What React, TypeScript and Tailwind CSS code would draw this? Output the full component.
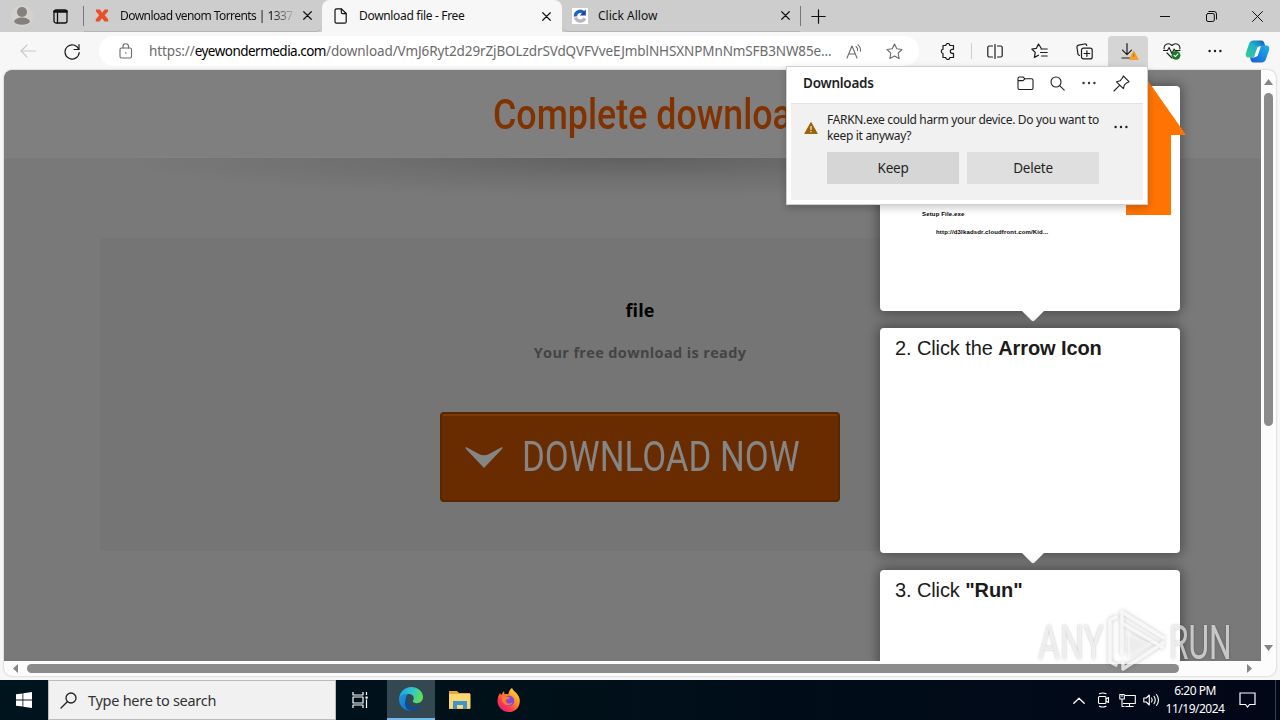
import type { ReactNode } from "react";
import clsx from "clsx";

type IconProps = {
  w?: number;
  h?: number;
  box?: string;
  stroke?: number;
  className?: string;
  children: ReactNode;
};

function Icon({ w = 18, h, box, stroke = 1.1, className, children }: IconProps) {
  const height = h ?? w;

  return (
    <svg
      width={w}
      height={height}
      viewBox={box ?? `0 0 ${w} ${height}`}
      fill="none"
      stroke="currentColor"
      strokeWidth={stroke}
      strokeLinecap="round"
      strokeLinejoin="round"
      className={clsx("shrink-0", className)}
    >
      {children}
    </svg>
  );
}

function Slot({ className, children }: { className: string; children: ReactNode }) {
  return (
    <div className={clsx("flex shrink-0 items-center justify-center", className)}>
      {children}
    </div>
  );
}

function CloseIcon() {
  return (
    <Icon w={9} box="0 0 10 10" stroke={1.3}>
      <path d="M.8.8l8.4 8.4M9.2.8.8 9.2" />
    </Icon>
  );
}

function Dots() {
  return (
    <Icon w={14} h={4}>
      <g fill="currentColor" stroke="none">
        <circle cx="1.6" cy="2" r="1.2" />
        <circle cx="7" cy="2" r="1.2" />
        <circle cx="12.4" cy="2" r="1.2" />
      </g>
    </Icon>
  );
}

function TabStrip() {
  return (
    <div className="flex h-8 shrink-0 items-stretch bg-[#cdcdcd] text-[12px] text-[#111]">
      <Slot className="w-11">
        <Icon w={22} className="text-[#84807c]">
          <circle cx="11" cy="11" r="11" fill="#d5d1cd" stroke="none" />
          <circle cx="11" cy="7" r="5" fill="currentColor" stroke="none" />
          <ellipse cx="11" cy="16.2" rx="7.8" ry="3.6" fill="currentColor" stroke="none" />
        </Icon>
      </Slot>
      <Slot className="w-8">
        <Icon w={15} h={15} stroke={1.3}>
          <rect x="1" y="1" width="13" height="13" rx="2" />
          <path d="M1.5 2.5h12" strokeWidth="2.6" />
          <path d="M4.5 4v10" />
        </Icon>
      </Slot>
      <div className="my-auto ml-[7px] h-5 w-px bg-[#777]" />

      <div className="flex w-[238px] items-center rounded-br-md border-b border-[#b5b5b5] pl-[11px]">
        <Icon w={14} h={13} className="text-[#e8502a]">
          <path
            d="M1 .5h4l2.2 3.2L9.5.5H13v2L9.7 6.3l3.5 4v2.2H9.5L7 9.2l-2.4 3.3H.8v-2.2l3.4-4L1 2.5z"
            fill="currentColor"
            stroke="none"
          />
        </Icon>
        <span className="ml-[11px] w-[176px] whitespace-nowrap tracking-[-0.56px] [mask-image:linear-gradient(to_right,#000_86%,transparent)]">
          Download venom Torrents | 1337
        </span>
        <Slot className="ml-[3px] w-4">
          <CloseIcon />
        </Slot>
      </div>

      <div className="flex w-[240px] items-center rounded-t-lg bg-[#f7f7f7] pl-3">
        <Icon w={13} h={16} stroke={1.2}>
          <path d="M2.5.8h5l4.7 4.7v8.2a1.5 1.5 0 0 1-1.5 1.5H2.5A1.5 1.5 0 0 1 1 13.7V2.3A1.5 1.5 0 0 1 2.5.8z" />
          <path d="M7.3 1v3.3a1.4 1.4 0 0 0 1.4 1.4H12" />
        </Icon>
        <span className="ml-3 w-[179px] whitespace-nowrap tracking-[-0.32px]">
          Download file - Free
        </span>
        <Slot className="w-4">
          <CloseIcon />
        </Slot>
      </div>

      <div className="flex w-[238px] items-center rounded-bl-md border-b border-[#b5b5b5] pl-[10px]">
        <svg width="16" height="16" viewBox="0 0 16 16" className="shrink-0">
          <rect width="16" height="16" fill="#fff" />
          <path d="M3.5 8.5a4.8 4.8 0 0 1 8-4" stroke="#2262c4" strokeWidth="3.4" fill="none" />
          <path d="M13.8 1.5v6h-6z" fill="#17479e" />
          <path d="M3.5 9.5a5 5 0 0 0 9.3.8" stroke="#b4b8bd" strokeWidth="3.2" fill="none" />
        </svg>
        <span className="ml-2.5 w-[179px] whitespace-nowrap">Click Allow</span>
        <Slot className="w-4">
          <CloseIcon />
        </Slot>
      </div>
      <div className="my-auto h-5 w-px bg-[#777]" />
      <Slot className="w-[35px]">
        <Icon w={15} stroke={1.2}>
          <path d="M7.5.8v13.4M.8 7.5h13.4" />
        </Icon>
      </Slot>

      <div className="ml-auto flex">
        <Slot className="w-[46px]">
          <Icon w={10} stroke={1}>
            <path d="M0 5.5h10" />
          </Icon>
        </Slot>
        <Slot className="w-[46px]">
          <Icon w={11} stroke={1}>
            <rect x=".5" y="2.5" width="7.8" height="8" rx="1.5" />
            <path d="M2.8.5H8A2.5 2.5 0 0 1 10.5 3v5.2" />
          </Icon>
        </Slot>
        <Slot className="w-[46px]">
          <Icon w={11} stroke={1}>
            <path d="M.5.5l10 10M10.5.5l-10 10" />
          </Icon>
        </Slot>
      </div>
    </div>
  );
}

function Toolbar() {
  return (
    <div className="flex h-[38px] shrink-0 items-center bg-[#f7f7f7] text-[#1c1c1c]">
      <Slot className="w-14 text-[#c9c9c9]">
        <Icon w={16} h={14}>
          <path d="M7 1 1 7l6 6M1 7h14.5" />
        </Icon>
      </Slot>
      <Slot className="mr-[11px] w-8">
        <Icon w={16} h={17} stroke={1.2}>
          <path d="M14.8 6.5A7.1 7.1 0 1 0 15.2 9.5" />
          <path d="M15 1.5v5h-5" />
        </Icon>
      </Slot>

      <div className="flex h-[30px] w-[820px] items-center rounded-full bg-white pl-5 text-[#6b6b6b]">
        <Icon w={14} h={16}>
          <rect x="1" y="5" width="11.5" height="10" rx="1.5" />
          <path d="M4 5V3.5a2.7 2.7 0 0 1 5.5 0V5" />
          <circle cx="6.8" cy="10" r=".8" fill="currentColor" stroke="none" />
        </Icon>
        <span className="ml-4 w-[690px] whitespace-nowrap text-[13.5px] tracking-[-0.11px]">
          https://<span className="tracking-[-0.52px] text-black">eyewondermedia.com</span>
          /download/VmJ6Ryt2d29rZjBOLzdrSVdQVFVveEJmblNHSXNPMnNmSFB3NW85e...
        </span>
        <Slot className="w-[31px]">
          <Icon w={17} h={15}>
            <path d="M1 14 6 2l5 12M2.8 10h6.4" />
            <path d="M10 2.5a4 4 0 0 1 1.5 4M12 .8a7 7 0 0 1 2.4 6.5" />
          </Icon>
        </Slot>
        <Slot className="ml-2 w-[32px]">
          <Icon w={17} h={17}>
            <path d="m8.5 1 2.3 4.8 5.2.7-3.8 3.7.9 5.3-4.6-2.5-4.6 2.5.9-5.3L1 6.5l5.2-.7z" />
          </Icon>
        </Slot>
      </div>

      <Slot className="w-[52px] pl-1">
        <Icon w={17} h={17} stroke={1.2}>
          <path d="M4 2.5h2.8a2 2 0 0 1 4 0h3.700v3.800h-1.200a2 2 0 0 0 0 4h1.200v4.200h-3.700a2 2 0 0 1-4 0H4v-4a2.200 2.200 0 0 1 0-4.300z" />
        </Icon>
      </Slot>
      <div className="h-4 w-px bg-[#d0d0d0]" />
      <Slot className="w-[45px]">
        <Icon w={16} h={15} stroke={1.2}>
          <path d="M5.5 2H2.3A1.5 1.5 0 0 0 .8 3.5v8A1.5 1.5 0 0 0 2.3 13h3.2M10.5 2h3.2a1.5 1.5 0 0 1 1.5 1.5v8a1.5 1.5 0 0 1-1.5 1.5h-3.2M8 .5v14" />
        </Icon>
      </Slot>
      <Slot className="w-[45px]">
        <Icon w={17} h={16} stroke={1.2}>
          <path d="M10.2 5.3 7.5 1 5.4 5.3.8 6l3.4 3.4-.8 5 4.1-2.2M10 6h6.2M9.5 9.5h6.7M10.500 13h5.700" />
        </Icon>
      </Slot>
      <Slot className="w-[44px]">
        <Icon w={17} h={17} stroke={1.2}>
          <path d="M3.5 12.5A2.5 2.5 0 0 1 1.8 10L1 4.500A2 2 0 0 1 2.600 2.200L8.500 1a2 2 0 0 1 2.300 1.500" />
          <rect x="5.500" y="5.200" width="10.700" height="10.700" rx="2" />
          <path d="M10.900 7.800v5.500M8.100 10.500h5.600" />
        </Icon>
      </Slot>
      <Slot className="ml-0.5 h-[30px] w-10 rounded-t-[4px] bg-[#d5d5d5] pl-0.5">
        <Icon w={20} h={20} stroke={1.2}>
          <path d="M8 2.5v11M3.5 9.2 8 13.7l4.5-4.5M3 17h8" />
          <path d="m14.700 10.500 4.300 7.800h-8.500z" fill="#f3a02c" stroke="#f3a02c" />
          <path d="M14.700 13v2.500" stroke="#b56a00" strokeWidth="1" />
        </Icon>
      </Slot>
      <Slot className="w-[44px] pl-1">
        <Icon w={18} h={18} stroke={1.1}>
          <path d="M9 16 4 11M1.2 7C.2 2.5 5.5-.2 9 3.5c3.5-3.7 8.8-1 7.8 3.5" />
          <path d="M.5 8.5h4l1.600-3 2.800 6 2.200-4.500 1 1.500h5" />
          <circle cx="13" cy="13.3" r="4.4" fill="#187a28" stroke="none" />
          <path d="m11 13.3 1.4 1.4 2.5-2.8" stroke="#fff" />
        </Icon>
      </Slot>
      <Slot className="w-[46px]">
        <Dots />
      </Slot>
      <Slot className="w-[38px]">
        <svg width="25" height="23" viewBox="0 0 25 23">
          <defs>
            <linearGradient id="copilotA" x1="0" y1="1" x2="1" y2="0">
              <stop offset="0" stopColor="#35d08d" />
              <stop offset=".55" stopColor="#20b1c9" />
              <stop offset="1" stopColor="#1457b8" />
            </linearGradient>
            <linearGradient id="copilotB" x1="0" y1="1" x2="1" y2="0">
              <stop offset="0" stopColor="#1c58d8" />
              <stop offset="1" stopColor="#18b5e8" />
            </linearGradient>
          </defs>
          <path
            d="M8.5.5h7.8c2 0 2.8 1.5 3.3 3.5l.6 2h-3.6c-2.6 0-3.7 1.2-4.4 3.4l-1.7 5.1c-.7 2-1.6 3-3.800 3H4c-3 0-3.800-2-3-4.800L4 4C4.700 1.800 6 .5 8.500.5z"
            fill="url(#copilotA)"
          />
          <path
            d="M16.5 22.5H8.700c-2 0-2.800-1.500-3.300-3.500l-.4-1.500h3c2.800 0 4-1.300 4.700-3.500l1.600-4.800c.7-2.200 1.700-3.700 3.900-3.700H21c3 0 3.800 2 3 4.800L21 19c-.7 2.200-2 3.500-4.500 3.500z"
            fill="url(#copilotB)"
          />
          <path d="M12.900 7.300h2.200l-3 8.600H9.900z" fill="#fff" stroke="#fff" strokeLinejoin="round" />
        </svg>
      </Slot>
    </div>
  );
}

function StepCard({ children }: { children?: ReactNode }) {
  return (
    <div className="relative h-[225px] w-[300px] shrink-0 rounded-[4px] bg-white px-[15px] pt-[5px] font-['Liberation_Sans'] text-[20px] leading-[30px] tracking-[-0.1px] text-[#1b1b1b] shadow-[0_0_12px_2px_rgba(0,0,0,0.38)]">
      {children}
      <svg width="24" height="12" viewBox="0 0 24 12" className="absolute top-full left-[141px] -mt-px">
        <path d="M0 0h24L13.5 10.5q-1.5 1.300-3 0z" fill="#fff" />
      </svg>
    </div>
  );
}

function Watermark() {
  return (
    <div className="absolute top-[609px] left-[1038px] flex h-16 w-[196px] items-center font-['Roboto'] text-[48px] leading-none text-white/65 [text-shadow:0_0_3px_rgba(0,0,0,0.25)]">
      <span className="w-[68px] origin-left scale-x-[0.7] whitespace-nowrap pt-1">ANY</span>
      <svg
        width="60"
        height="64"
        viewBox="0 0 60 64"
        fill="none"
        stroke="#fff"
        strokeOpacity=".75"
        strokeWidth="3.5"
        strokeLinejoin="round"
        strokeLinecap="round"
        className="shrink-0 drop-shadow-[0_0_2px_rgba(0,0,0,0.3)]"
      >
        <path d="M16 44V3l41 25.5M16 14l40 24M57 34 17 60v-6" />
        <path d="M10 8 4 11v42l6 3" />
        <path d="m22 24 24 11-24 14z" fill="#fff" fillOpacity=".55" stroke="none" />
      </svg>
      <span className="ml-[3px] origin-left scale-x-[0.66] whitespace-nowrap pt-1">RUN</span>
    </div>
  );
}

function DownloadPage() {
  return (
    <div className="relative h-[591px] w-[1257px] overflow-hidden rounded-tl-lg bg-[#797979]">
      <div className="h-[88px] border-b border-[#828282] bg-[#7f7f7f] pt-[15px]">
        <h1 className="ml-[489px] w-[400px] origin-left scale-x-[0.852] whitespace-nowrap font-['Roboto'] text-[42px] leading-[60px] font-medium text-[#803300]">
          Complete download
        </h1>
      </div>
      <div className="h-20 bg-[radial-gradient(ellipse_520px_40px_at_50%_0,#606060,#6f6f6f_50%,#797979)]" />

      <div className="mr-[81px] ml-24 flex h-[313px] flex-col items-center rounded-[4px] bg-[#757575] font-['Open_Sans'] font-bold">
        <div className="mt-[60px] text-[18px] leading-6 tracking-[0.1px] text-black">file</div>
        <div className="mt-[19px] text-[14.5px] leading-6 tracking-[0.36px] whitespace-nowrap text-[#444]">
          Your free download is ready
        </div>
        <button
          type="button"
          className="mt-[47px] flex h-[90px] w-[400px] items-center rounded-[4px] border-2 border-[#582600] bg-[#692c00] pl-[23px] text-[#858585] shadow-[inset_0_2px_0_#793b0d]"
        >
          <svg width="38" height="21" viewBox="0 0 38 21" className="shrink-0">
            <path d="M1 0q-1 .5 0 2l18 19L37 2q1-1.5 0-2L24 7q-5 2.500-10 0z" fill="currentColor" />
          </svg>
          <span className="ml-[19px] origin-left scale-x-[0.829] whitespace-nowrap font-['Roboto'] text-[42px] leading-none font-normal">
            DOWNLOAD NOW
          </span>
        </button>
      </div>

      <div className="absolute top-4 left-[876px] flex flex-col gap-[17px]">
        <StepCard>
          <div className="pt-[118px] pl-[27px] text-[6px] leading-[10px] font-bold tracking-[0.16px] text-black">
            <p className="whitespace-nowrap">Setup File.exe</p>
            <p className="mt-[8px] ml-[14px] whitespace-nowrap">http://d3lkadsdr.cloudfront.com/Kid...</p>
          </div>
        </StepCard>
        <StepCard>
          2. Click the <b>Arrow Icon</b>
        </StepCard>
        <StepCard>
          3. Click <b>"Run"</b>
        </StepCard>
      </div>

      <svg width="64" height="140" viewBox="0 0 64 140" className="absolute top-[5px] left-[1120px]">
        <path d="M2 140v-15h20V3l40 57H47v80z" fill="#ff7300" />
      </svg>
    </div>
  );
}

function DownloadsPopup() {
  return (
    <div className="absolute top-[66px] left-[786px] h-[139px] w-[362px] border border-[#cfcfcf] bg-white text-[#1f1f1f] shadow-[0_3px_8px_rgba(0,0,0,0.2)]">
      <div className="flex h-9 items-center pb-1 pl-4">
        <span className="w-[206px] text-[13.5px] font-semibold tracking-[-0.25px]">Downloads</span>
        <Slot className="w-8">
          <Icon w={17} h={14}>
            <path d="M1 5V2.5A1.5 1.5 0 0 1 2.5 1H6l2 1.8h6.5A1.5 1.5 0 0 1 16 4.3V12a1.5 1.5 0 0 1-1.5 1.5h-12A1.5 1.5 0 0 1 1 12zM1 4.6h5L8 2.8" />
          </Icon>
        </Slot>
        <Slot className="w-8">
          <Icon w={15}>
            <circle cx="6" cy="6" r="5" />
            <path d="m9.7 9.7 4.5 4.5" />
          </Icon>
        </Slot>
        <Slot className="w-8 text-[#333]">
          <Dots />
        </Slot>
        <Slot className="w-8">
          <Icon w={17}>
            <path d="m10.3 1 5.7 5.7-2 1-2.6 2.2-1 3.8-6.9-6.900 3.600-1L9.400 3zM6.500 10.300 1 16" />
          </Icon>
        </Slot>
      </div>
      <div className="mx-1 flex h-[97px] border-t border-[#e4e4e4] bg-[#f1f1f1] pl-[13px]">
        <svg width="14" height="12" viewBox="0 0 14 12" className="mt-[18px] mr-[9px] shrink-0">
          <path d="M7 .5 13.3 11.7H.7z" fill="#9a6208" stroke="#9a6208" strokeLinejoin="round" />
          <path d="M7 4v4M7 9v1.3" stroke="#f9e2b0" strokeWidth="1.3" />
        </svg>
        <div className="w-[272px]">
          <p className="mt-2 text-[12px] leading-4 tracking-[-0.32px] whitespace-nowrap">
            FARKN.exe could harm your device. Do you want to
            <br />
            keep it anyway?
          </p>
          <div className="mt-2 flex gap-2 text-[13.5px] tracking-[-0.25px]">
            <button type="button" className="h-8 w-[132px] bg-[#d6d6d6]">
              Keep
            </button>
            <button type="button" className="h-8 w-[132px] bg-[#dfdfdf]">
              Delete
            </button>
          </div>
        </div>
        <Slot className="h-[46px] w-11">
          <Dots />
        </Slot>
      </div>
    </div>
  );
}

function Taskbar() {
  return (
    <div className="flex h-10 shrink-0 items-stretch bg-[linear-gradient(to_right,#00141e,#001019_45%,#020718)] text-white">
      <Slot className="w-12">
        <svg width="16" height="16" viewBox="0 0 16 16" fill="#fff">
          <path d="M0 2.3 6.5 1.4v6.2H0zM7.3 1.3 16 0v7.6H7.3zM0 8.4h6.5v6.2L0 13.7zM7.3 8.4H16V16l-8.7-1.2z" />
        </svg>
      </Slot>
      <div className="flex w-72 items-center border border-[#b9bbbc] bg-[#f1f1f1] pl-[11px] text-[#333]">
        <Icon w={17} h={17} stroke={1.3} className="text-[#222]">
          <circle cx="11" cy="6" r="5" />
          <path d="M7.3 9.7 1 16" />
        </Icon>
        <span className="ml-[11px] pt-0.5 text-[14.5px] tracking-[-0.28px] whitespace-nowrap">
          Type here to search
        </span>
      </div>
      <Slot className="w-[51px] pr-[3px]">
        <Icon w={17} h={16} stroke={1.2}>
          <path d="M1 .5V3h10V.5M1 15.5V13h10v2.5M14.5.5v2M14.5 8v7.5" strokeLinecap="square" />
          <rect x="1" y="5" width="10" height="6" />
          <rect x="13.5" y="4.5" width="2.2" height="2.2" fill="currentColor" stroke="none" />
        </Icon>
      </Slot>
      <Slot className="w-12 border-b-2 border-[#76b9ed] bg-[#334850]">
        <svg width="24" height="24" viewBox="0 0 24 24">
          <defs>
            <linearGradient id="edgeTop" x1="0" y1="0" x2="1" y2=".3">
              <stop offset="0" stopColor="#1d9de0" />
              <stop offset=".55" stopColor="#2cc5d0" />
              <stop offset="1" stopColor="#5fdc5c" />
            </linearGradient>
            <linearGradient id="edgeSide" x1="0" y1="0" x2="1" y2="1">
              <stop offset="0" stopColor="#1a9be5" />
              <stop offset="1" stopColor="#1262b5" />
            </linearGradient>
          </defs>
          <path
            d="M0 12C.5 5 5.5 0 12.2 0 19 0 24 4.6 24 10c0 4-3 6.2-6.2 6.2-3 0-4-1.2-4-2.2 0-.7 1-1.2 1-3 0-2-2-4-5-4C5 6.500 1 9 0 12z"
            fill="url(#edgeTop)"
          />
          <path
            d="M0 12c1-4 5-6 9.500-5.200C7 8.500 6 11.500 7 15c1.200 4.500 5 7 9 7-1.500 1.300-3 2-5 2C4.500 23.500 0 18.500 0 12z"
            fill="url(#edgeSide)"
          />
          <path
            d="M9.500 9.800C6.500 13 8.500 19.500 14.500 20c3 .2 5.500-.8 7.800-2-1.800 3.500-5.500 6-10 6C6 23 3.500 14 9.500 9.800z"
            fill="#124a91"
          />
        </svg>
      </Slot>
      <Slot className="w-[50px]">
        <svg width="22" height="20" viewBox="0 0 22 20">
          <path d="M0 1h8l2 2h11v16H0z" fill="#e9a93a" />
          <path d="M0 4h21.5v14.5H0z" fill="#fcd873" />
          <path d="M4 19v-8h14v8h-4v-4H8v4z" fill="#3f94d0" />
        </svg>
      </Slot>
      <Slot className="w-12">
        <svg width="24" height="24" viewBox="0 0 24 24">
          <defs>
            <linearGradient id="fox" x1="1" y1="0" x2=".2" y2="1">
              <stop offset="0" stopColor="#fff44f" />
              <stop offset=".4" stopColor="#ff9b20" />
              <stop offset=".75" stopColor="#ff3b4e" />
              <stop offset="1" stopColor="#e3168c" />
            </linearGradient>
          </defs>
          <path
            d="M15 0c1 3 6 5 7.5 10.5C24 18 19 24 12 24 5.5 24 .5 19 .5 13c0-4 1.500-6.500 2.700-8L4 7.200 7 3l.5 3.300c2-.6 4 .2 4 .2C11.500 4 13 1 15 0z"
            fill="url(#fox)"
          />
          <circle cx="12" cy="12.8" r="5.3" fill="#8446dc" />
          <path
            d="M5 8c3-.8 4 .3 6 1l2 .5c-.3 1.500-3 1.500-4 2.500-.7 3.500 4 4.500 6.500 2.500-1 3.800-8 4-10-1C4.500 11 5 9 5 8z"
            fill="#ff7a29"
          />
        </svg>
      </Slot>

      <div className="ml-auto flex items-center">
        <Slot className="w-6">
          <Icon w={12} h={7} stroke={1.3}>
            <path d="m.8 6.2 5.2-5 5.2 5" />
          </Icon>
        </Slot>
        <Slot className="w-6">
          <Icon w={13} h={16}>
            <rect x="1.5" y="4.5" width="7.5" height="7" rx="1" />
            <path d="m9 7 2.5-1.5v5L9 9M2.500 1.800Q5.500.2 9 1.800M2.500 14.200q3 1.600 6.500 0" />
          </Icon>
        </Slot>
        <Slot className="w-6">
          <Icon w={17} h={15}>
            <path d="M6.5 2.5h9.8v8H4.5M10.5 10.5v3M7 13.5h7M3 6.5v7h2" strokeLinecap="square" />
            <rect x=".8" y="1.5" width="4.5" height="4.5" />
            <path d="M3 1.5v2" />
          </Icon>
        </Slot>
        <Slot className="w-6">
          <Icon w={17} h={14}>
            <path d="M.8 5v4h2.5l3 3V2l-3 3z" />
            <path d="M8.5 5q1.3 2 0 4M11 3.2q2.5 3.8 0 7.6M13.5 1.5q4 5.5 0 11" />
          </Icon>
        </Slot>
        <div className="w-16 text-center text-[12px] leading-[18px] tracking-[-0.5px] whitespace-nowrap">
          <div>6:20 PM</div>
          <div>11/19/2024</div>
        </div>
        <Slot className="mr-2 w-10">
          <Icon w={17} h={16} stroke={1.2}>
            <path d="M1 1h15v11.5h-5.5L8.5 15l-2-2.5H1z" strokeLinejoin="miter" />
          </Icon>
        </Slot>
        <div className="mr-1 h-10 w-px bg-[#3a414e]" />
      </div>
    </div>
  );
}

export default function App() {
  return (
    <div className="relative flex h-[720px] w-[1280px] flex-col overflow-hidden bg-[#f7f7f7] font-['Noto_Sans',sans-serif]">
      <TabStrip />
      <Toolbar />

      <div className="mx-1 mb-1 flex h-[606px] flex-col overflow-hidden rounded-lg bg-[#fcfcfc] shadow-[0_0_2px_rgba(0,0,0,0.3)]">
        <div className="flex">
          <DownloadPage />
          <div className="flex w-[15px] flex-col items-center pt-[9px] pb-2.5 text-[#858585]">
            <svg width="9" height="6" viewBox="0 0 9 6" fill="currentColor">
              <path d="M4.5 0 9 6H0z" />
            </svg>
            <div className="mt-2 h-[333px] w-[9px] rounded-full bg-[#8b8b8b]" />
            <svg width="9" height="6" viewBox="0 0 9 6" fill="currentColor" className="mt-auto">
              <path d="M0 0h9L4.5 6z" />
            </svg>
          </div>
        </div>
        <div className="flex h-[15px] items-center pl-[9px] text-[#858585]">
          <svg width="5" height="9" viewBox="0 0 5 9" fill="currentColor">
            <path d="M5 0v9L0 4.5z" />
          </svg>
          <div className="ml-[9px] h-[9px] w-[1152px] rounded-full bg-[#8b8b8b]" />
          <svg width="5" height="9" viewBox="0 0 5 9" fill="currentColor" className="ml-[68px]">
            <path d="M0 0v9l5-4.5z" />
          </svg>
        </div>
      </div>

      <Taskbar />
      <Watermark />
      <DownloadsPopup />
    </div>
  );
}
